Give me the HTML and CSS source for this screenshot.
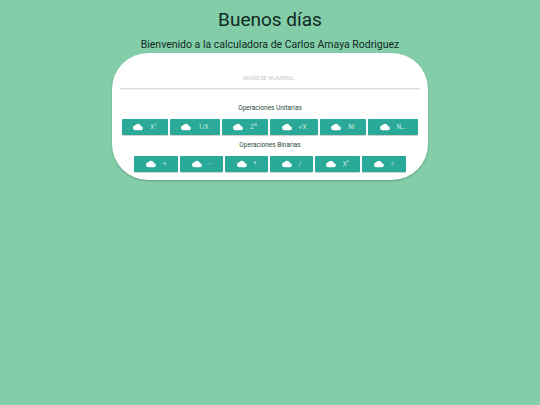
FILE: index.html
```html
<!DOCTYPE html>
<html lang="es">
<head>
<meta charset="utf-8">
<title>Calculadora</title>
<link rel="stylesheet" href="styles.css">
</head>
<body>
<svg class="defs" width="0" height="0" aria-hidden="true"><symbol id="cloud" viewBox="0 0 24 24"><path d="M19.35 10.04A7.49 7.49 0 0 0 12 4a7.5 7.5 0 0 0-6.65 4.04A6 6 0 0 0 6 20h13a5 5 0 0 0 .35-9.96z"/></symbol></svg>
<h1 class="title">Buenos días</h1>
<h2 class="subtitle">Bienvenido a la calculadora de Carlos Amaya Rodriguez</h2>
<main class="card">
  <div class="field"><span class="placeholder">INGRESE NUMERO...</span></div>
  <h3 class="group">Operaciones Unitarias</h3>
  <div class="row unary">
    <button class="btn w46"><svg class="ico"><use href="#cloud"/></svg><span>X<sup>2</sup></span></button>
    <button class="btn w50"><svg class="ico"><use href="#cloud"/></svg><span>1/X</span></button>
    <button class="btn w46"><svg class="ico"><use href="#cloud"/></svg><span>2<sup>N</sup></span></button>
    <button class="btn w48"><svg class="ico"><use href="#cloud"/></svg><span>√X</span></button>
    <button class="btn w46"><svg class="ico"><use href="#cloud"/></svg><span>N!</span></button>
    <button class="btn w50"><svg class="ico"><use href="#cloud"/></svg><span>N,..</span></button>
  </div>
  <h3 class="group second">Operaciones Binarias</h3>
  <div class="row binary">
    <button class="btn w44"><svg class="ico"><use href="#cloud"/></svg><span>+</span></button>
    <button class="btn w43"><svg class="ico"><use href="#cloud"/></svg><span>-</span></button>
    <button class="btn w43"><svg class="ico"><use href="#cloud"/></svg><span>*</span></button>
    <button class="btn w43"><svg class="ico"><use href="#cloud"/></svg><span>/</span></button>
    <button class="btn w45"><svg class="ico"><use href="#cloud"/></svg><span>X<sup>Y</sup></span></button>
    <button class="btn w44"><svg class="ico"><use href="#cloud"/></svg><span>=</span></button>
  </div>
</main>
</body>
</html>
```
FILE: styles.css
```css
* { box-sizing: border-box; }
html, body { margin: 0; height: 100%; }
body {
  background: #84cda9;
  font-family: Roboto, "Noto Sans", sans-serif;
  color: #0f2a24;
  display: flex;
  flex-direction: column;
  align-items: center;
}
.defs { position: absolute; }
.title {
  margin: 7px 0 0;
  height: 25px;
  font-size: 19px;
  line-height: 25px;
  font-weight: 400;
}
.subtitle {
  margin: 4px 0 0;
  height: 17px;
  font-size: 10.5px;
  line-height: 17px;
  font-weight: 400;
}
.card {
  width: 316px;
  height: 127px;
  background: #fff;
  border-radius: 36px;
  box-shadow: 0 1px 2px rgba(30, 80, 60, .35);
  display: flex;
  flex-direction: column;
  align-items: center;
  padding: 0 8px;
}
.field {
  width: 100%;
  margin-top: 18px;
  height: 18px;
  text-align: center;
  border-bottom: 1px solid #dcdcdc;
  box-shadow: 0 1px 0 #efefef;
}
.placeholder {
  display: block;
  font-size: 6px;
  line-height: 14px;
  color: #c9c9c9;
}
.group {
  margin: 14px 0 0;
  height: 10px;
  font-size: 6.5px;
  line-height: 10px;
  font-weight: 400;
  color: #1f4a38;
}
.group.second { margin-top: 5px; }
.row {
  display: flex;
  justify-content: center;
  gap: 2px;
  margin-top: 6px;
}
.btn {
  height: 16px;
  padding: 0;
  border: 0;
  border-radius: 1px;
  background: #2aa898;
  color: #cdebe5;
  font: 400 6.5px/16px Roboto, sans-serif;
  box-shadow: 0 1px 1px rgba(0, 0, 0, .2);
  display: flex;
  align-items: center;
  justify-content: center;
  gap: 7px;
}
.btn sup { font-size: 4px; line-height: 0; vertical-align: 3px; }
.ico { width: 10px; height: 10px; fill: #fff; }
.w43 { width: 43px; }
.w44 { width: 44px; }
.w45 { width: 45px; }
.w46 { width: 46px; }
.w48 { width: 48px; }
.w50 { width: 50px; }
```
